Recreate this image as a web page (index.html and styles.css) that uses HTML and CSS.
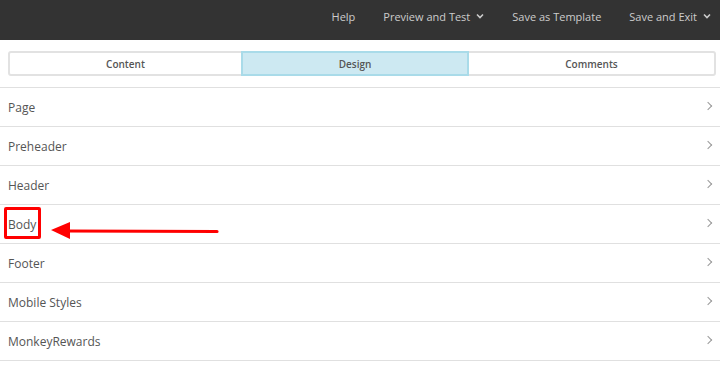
FILE: index.html
```html
<!DOCTYPE html>
<html lang="en">
  <head>
    <meta charset="UTF-8" />
    <title>Design</title>
    <link rel="stylesheet" href="styles.css">
  </head>
  <body>
    <!-- top bar -->
    <header class="topbar">
      <a class="nav-item">Help</a>
      <a class="nav-item">Preview and Test <span class="caret"><svg width="8" height="6" viewBox="0 0 8 6"><polyline points="1,1.5 4,4.5 7,1.5" fill="none" stroke="#ccc" stroke-width="1.6"/></svg></span></a>
      <a class="nav-item">Save as Template</a>
      <a class="nav-item last">Save and Exit <span class="caret"><svg width="8" height="6" viewBox="0 0 8 6"><polyline points="1,1.5 4,4.5 7,1.5" fill="none" stroke="#ccc" stroke-width="1.6"/></svg></span></a>
    </header>

    <!-- tabs -->
    <div class="tabs">
      <div class="tab">Content</div>
      <div class="tab active">Design</div>
      <div class="tab">Comments</div>
    </div>

    <ul class="sections">
      <li class="row">Page<span class="chev"></span></li>
      <li class="row">Preheader<span class="chev"></span></li>
      <li class="row">Header<span class="chev"></span></li>
      <li class="row">Body<span class="chev"></span></li>
      <li class="row">Footer<span class="chev"></span></li>
      <li class="row">Mobile Styles<span class="chev"></span></li>
      <li class="row">MonkeyRewards<span class="chev"></span></li>
    </ul>

    <!-- annotation -->
    <div class="mark-box"></div>
    <svg class="mark-arrow" width="180" height="24" viewBox="0 0 180 24">
      <line x1="16" y1="12" x2="166" y2="12.5" stroke="#f00" stroke-width="3.2" stroke-linecap="round"/>
      <polygon points="0,11 19,3 19,20" fill="#f00"/>
    </svg>
  </body>
</html>
```

FILE: styles.css
```css
body {
  margin: 0;
  font-family: "Open Sans", "DejaVu Sans", sans-serif;
  background: #fff;
  position: relative;
}
.topbar {
  height: 40px;
  background: #333;
  display: flex;
  justify-content: flex-end;
  align-items: center;
  padding-right: 9px;
  padding-bottom: 8px;
  box-sizing: border-box;
}
.nav-item {
  color: #ccc;
  font-size: 11px;
  padding: 0 14px;
  display: flex;
  align-items: center;
  white-space: nowrap;
}
.nav-item.last {
  padding-right: 0;
}
.caret {
  margin-left: 6px;
  display: inline-flex;
}
.tabs {
  display: flex;
  margin: 11px 4px 0 8px;
  height: 25px;
  border: 2px solid #e2e2e2;
  border-radius: 3px;
  box-sizing: border-box;
}
.tab {
  font-size: 10px;
  font-weight: 600;
  color: #555;
  display: flex;
  align-items: center;
  justify-content: center;
  width: 231px;
}
.tab:last-child {
  flex: 1;
}
.tab.active {
  width: 228px;
  background: #cde9f2;
  border: 2px solid #a9dbe9;
  margin: -2px 0;
  box-sizing: border-box;
}
.sections {
  list-style: none;
  margin: 11px 0 0;
  padding: 0;
  border-top: 1px solid #e0e0e0;
}
.row {
  height: 38px;
  border-bottom: 1px solid #e0e0e0;
  display: flex;
  align-items: center;
  justify-content: space-between;
  padding: 1px 9px 0 8px;
  box-sizing: border-box;
  height: 39px;
  font-size: 12px;
  color: #555;
}
.chev {
  width: 5px;
  height: 5px;
  border-top: 1.5px solid #999;
  border-right: 1.5px solid #999;
  transform: rotate(45deg);
  margin-bottom: 3px;
}
.mark-box {
  position: absolute;
  left: 4px;
  top: 207px;
  width: 31px;
  height: 26px;
  border: 3px solid #f00;
  border-radius: 2px;
}
.mark-arrow {
  position: absolute;
  left: 51px;
  top: 219px;
}
```
